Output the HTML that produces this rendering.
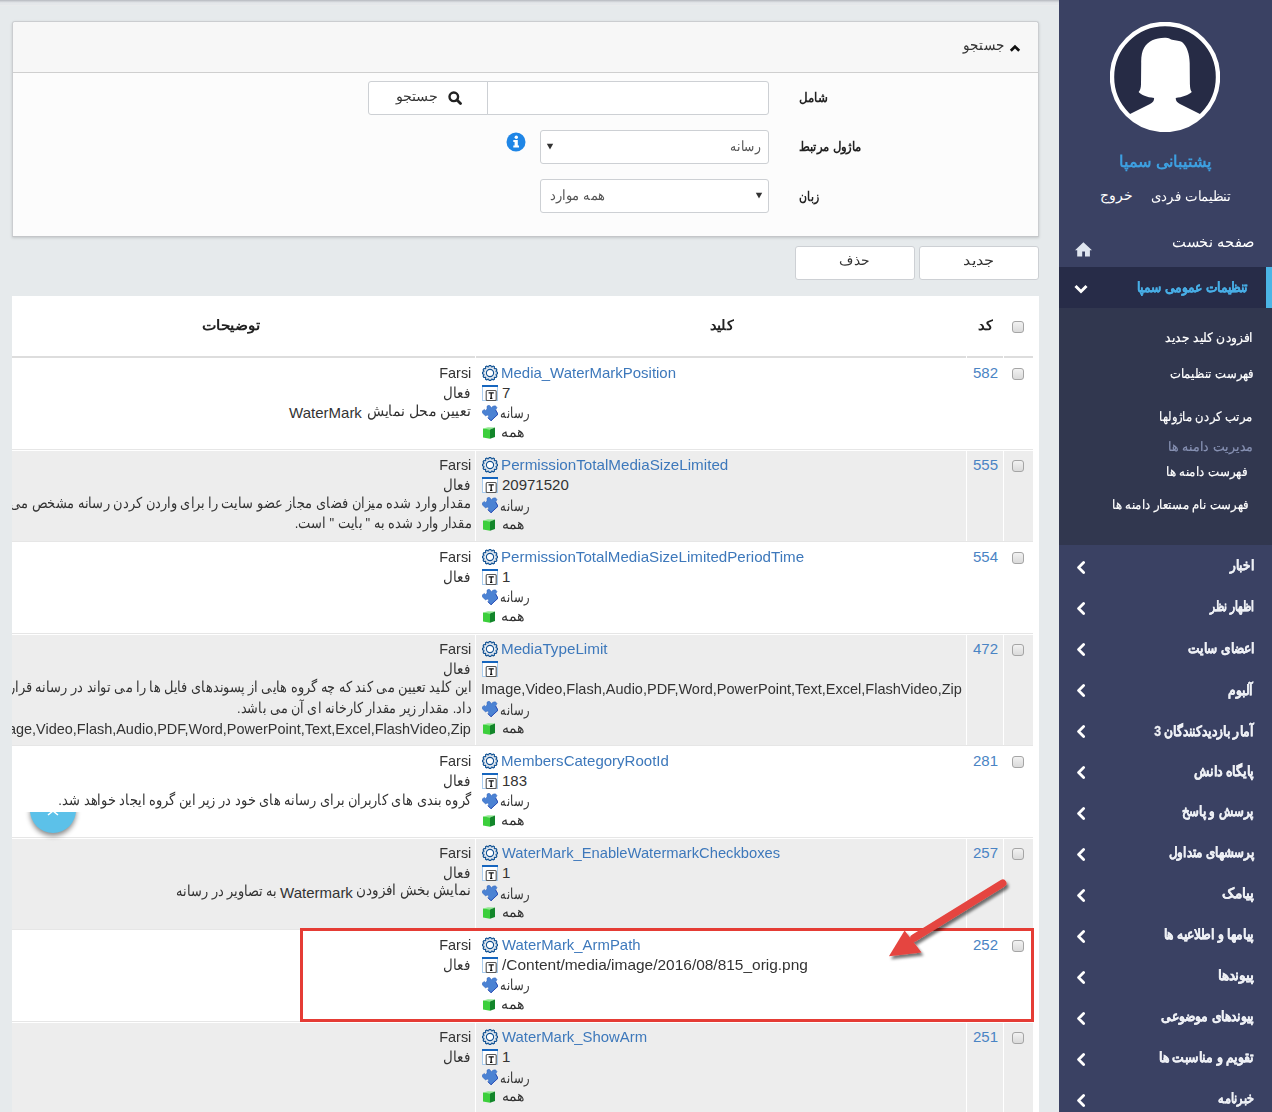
<!DOCTYPE html>
<html><head><meta charset="utf-8">
<style>
*{box-sizing:border-box;margin:0;padding:0}
html,body{width:1272px;height:1112px;overflow:hidden}
body{position:relative;background:#e6eaec;font-family:"Liberation Sans",sans-serif;color:#333}
.a{position:absolute;white-space:nowrap}
.fx{position:absolute;right:0;top:0;direction:rtl;white-space:nowrap;transform-origin:100% 50%}
.lx{position:absolute;left:0;top:0;white-space:nowrap;transform-origin:0 50%}
.topsh{left:0;top:0;width:1059px;height:6px;background:linear-gradient(#b5b8be 0,#d9dce0 2px,#e4e7ea 3px,#e4e7ea 5px,#eeeeee 6px)}
.inp{background:#fff;border:1px solid #cdd0d4;border-radius:3px}
.btn{background:#fff;border:1px solid #cdd0d4;border-radius:3px}
#tp{left:12px;top:296px;width:1027px;height:816px;background:#fff;overflow:hidden}
.cb{position:absolute;width:12px;height:12px;border:1px solid #a5a5a5;border-radius:3px;background:linear-gradient(#f2f2f2,#dadada)}
.ico{position:absolute;width:16px;height:16px}
</style></head><body>
<svg width="0" height="0" style="position:absolute">
<defs>
<symbol id="gear" viewBox="0 0 16 16"><path d="M6.69 1.84 L7.21 0.44 L8.79 0.44 L9.31 1.84 L9.95 2.01 L11.09 1.06 L12.47 1.85 L12.22 3.32 L12.68 3.78 L14.15 3.53 L14.94 4.91 L13.99 6.05 L14.16 6.69 L15.56 7.21 L15.56 8.79 L14.16 9.31 L13.99 9.95 L14.94 11.09 L14.15 12.47 L12.68 12.22 L12.22 12.68 L12.47 14.15 L11.09 14.94 L9.95 13.99 L9.31 14.16 L8.79 15.56 L7.21 15.56 L6.69 14.16 L6.05 13.99 L4.91 14.94 L3.53 14.15 L3.78 12.68 L3.32 12.22 L1.85 12.47 L1.06 11.09 L2.01 9.95 L1.84 9.31 L0.44 8.79 L0.44 7.21 L1.84 6.69 L2.01 6.05 L1.06 4.91 L1.85 3.53 L3.32 3.78 L3.78 3.32 L3.53 1.85 L4.91 1.06 L6.05 2.01 Z" fill="#e3e9f0" stroke="#0d4f92" stroke-width="1.1" stroke-linejoin="round"/><circle cx="8" cy="8" r="3.6" fill="#fff" stroke="#0d4f92" stroke-width="1.1"/></symbol>
<symbol id="tic" viewBox="0 0 16 16"><rect x="0.5" y="0.5" width="15" height="15" fill="#fff" stroke="#a9cdef" stroke-width="1"/><rect x="0" y="0" width="16" height="2" fill="#1666bf"/><rect x="4.2" y="5.5" width="10" height="10" rx="1" fill="#fff" stroke="#555" stroke-width="1.1"/><path d="M6.6 7.8 L11.8 7.8 M9.2 7.8 L9.2 13.4 M8 13.4 L10.4 13.4" fill="none" stroke="#111" stroke-width="1.3"/></symbol>
<symbol id="puz" viewBox="0 0 16 16"><path d="M5 1.2 L6.8 0 L8.6 1.4 L9.4 3 L10.8 1.2 L13.4 0.8 L15 2.6 L13.6 5 L16 9.2 L9 15.8 L6 12.8 L6.9 11 L5.2 10.1 L3.6 10.9 L0.4 8 L0.2 6 L2.4 4.4 L3.6 5.4 L5 4 Z" fill="#4b82d3" stroke="#3064bd" stroke-width="0.5" stroke-linejoin="round"/><path d="M13.6 5 L16 9.2 L9 15.8 L6 12.8" fill="none" stroke="#1d3fae" stroke-width="0.8"/></symbol>
<symbol id="cube" viewBox="0 0 16 16"><path d="M1 3.6 L6 2.2 L13 2.6 L8 4.4 Z" fill="#8fe88f"/><path d="M1 3.6 L8 4.4 L8 13.8 L1 12.4 Z" fill="#3ccf3c"/><path d="M8 4.4 L13 2.6 L13 12 L8 13.8 Z" fill="#12862a"/></symbol>
</defs></svg>
<div class="a topsh"></div>
<div class="a" style="left:1059px;top:0;width:213px;height:1112px;background:#3a4163"></div>
<svg class="a" style="left:1110px;top:22px" width="110" height="110" viewBox="0 0 110 110">
<defs><clipPath id="cc"><circle cx="55" cy="55" r="53"/></clipPath></defs>
<circle cx="55" cy="55" r="53" fill="#262b45"/>
<g clip-path="url(#cc)" fill="#fff">
<path d="M31.2 41 C31 35 32 29 34 26 C38 19 46 15.5 55.8 15.8 C59 16 60 17 62 17.8 C66 18.3 70 19 72 20 C77 24 79.5 32 79.7 41 L79.9 62 C80 66 80.5 68.5 81.8 70.1 C79 73 72 75.5 65.7 76 C65.8 79 67 80.5 70 82 L89.5 91.8 L110 110 L0 110 L20.5 91.8 L40 82 C43 80.5 44.1 79 44.1 76 C37 75.5 31 73 28.6 70.1 C30 68.5 31 66 31 62 Z"/>
</g><circle cx="55" cy="55" r="53" fill="none" stroke="#fff" stroke-width="4.4"/></svg>
<div id="sb_name" class="a" style="left:1211.00px;top:152.20px;font-size:16px;line-height:20px;color:#3d9fe0;font-weight:bold;"><div class="fx" style="transform:scaleX(1.0111)">پشتیبانی سمپا</div></div>
<div id="sb_set" class="a" style="left:1231.00px;top:185.50px;font-size:14px;line-height:20px;color:#fff;"><div class="fx" style="transform:scaleX(0.9530)">تنظیمات فردی</div></div>
<div id="sb_out" class="a" style="left:1133.00px;top:185.00px;font-size:14px;line-height:20px;color:#fff;"><div class="fx" style="transform:scaleX(1.0000)">خروج</div></div>
<div id="sb_home" class="a" style="left:1255.00px;top:232.00px;font-size:15px;line-height:20px;color:#fff;"><div class="fx" style="transform:scaleX(0.9775)">صفحه نخست</div></div>
<svg class="a" style="left:1075px;top:241.5px" width="17" height="15" viewBox="0 0 17 15"><path fill="#dfe5ef" d="M8.4 0.2 L17 8.2 L14.9 8.2 L14.9 14.4 L10 14.4 L10 9.6 L7.2 9.6 L7.2 14.4 L2.2 14.4 L2.2 8.2 L0 8.2 Z"/></svg>
<div class="a" style="left:1059px;top:267px;width:213px;height:41px;background:#272c48"></div>
<div class="a" style="left:1266px;top:267px;width:6px;height:41px;background:#4bb5e6"></div>
<div id="sb_act" class="a" style="left:1248.00px;top:276.50px;font-size:14px;line-height:20px;color:#48aee6;font-weight:bold;-webkit-text-stroke:0.2px #48aee6;"><div class="fx" style="transform:scaleX(0.8747)">تنظیمات عمومی سمپا</div></div>
<svg class="a" style="left:1074px;top:284px" width="14" height="11" viewBox="0 0 14 11"><path d="M1.5 2 L7 7.5 L12.5 2" fill="none" stroke="#fff" stroke-width="3"/></svg>
<div class="a" style="left:1059px;top:308px;width:213px;height:237px;background:#31374f"></div>
<div id="sub1" class="a" style="left:1253.40px;top:327.50px;font-size:13px;line-height:20px;color:#fff;-webkit-text-stroke:0.2px #fff;"><div class="fx" style="transform:scaleX(0.9460)">افزودن کلید جدید</div></div>
<div id="sub2" class="a" style="left:1253.40px;top:363.50px;font-size:13px;line-height:20px;color:#fff;-webkit-text-stroke:0.2px #fff;"><div class="fx" style="transform:scaleX(0.8924)">فهرست تنظیمات</div></div>
<div id="sub3" class="a" style="left:1252.40px;top:406.70px;font-size:13px;line-height:20px;color:#fff;-webkit-text-stroke:0.2px #fff;"><div class="fx" style="transform:scaleX(0.8934)">مرتب کردن ماژولها</div></div>
<div id="sub4" class="a" style="left:1253.40px;top:436.50px;font-size:13px;line-height:20px;color:#8791b3;-webkit-text-stroke:0.2px #8791b3;"><div class="fx" style="transform:scaleX(0.9640)">مدیریت دامنه ها</div></div>
<div id="sub5" class="a" style="left:1247.40px;top:461.50px;font-size:13px;line-height:20px;color:#fff;-webkit-text-stroke:0.2px #fff;"><div class="fx" style="transform:scaleX(0.9086)">فهرست دامنه ها</div></div>
<div id="sub6" class="a" style="left:1248.40px;top:495.30px;font-size:13px;line-height:20px;color:#fff;-webkit-text-stroke:0.2px #fff;"><div class="fx" style="transform:scaleX(0.8988)">فهرست نام مستعار دامنه ها</div></div>
<div id="mn0" class="a" style="left:1254.00px;top:554.50px;font-size:14px;line-height:20px;color:#eef0f5;font-weight:bold;-webkit-text-stroke:0.3px #eef0f5;"><div class="fx" style="transform:scaleX(0.8559)">اخبار</div></div>
<svg class="a" style="left:1076px;top:560.5px" width="10" height="13" viewBox="0 0 10 13"><path d="M7.6 1.6 L2.6 6.5 L7.6 11.4" fill="none" stroke="#fff" stroke-width="2.8" stroke-linecap="round" stroke-linejoin="round"/></svg>
<div id="mn1" class="a" style="left:1254.00px;top:595.50px;font-size:14px;line-height:20px;color:#eef0f5;font-weight:bold;-webkit-text-stroke:0.3px #eef0f5;"><div class="fx" style="transform:scaleX(0.7461)">اظهار نظر</div></div>
<svg class="a" style="left:1076px;top:601.5px" width="10" height="13" viewBox="0 0 10 13"><path d="M7.6 1.6 L2.6 6.5 L7.6 11.4" fill="none" stroke="#fff" stroke-width="2.8" stroke-linecap="round" stroke-linejoin="round"/></svg>
<div id="mn2" class="a" style="left:1255.00px;top:637.50px;font-size:14px;line-height:20px;color:#eef0f5;font-weight:bold;-webkit-text-stroke:0.3px #eef0f5;"><div class="fx" style="transform:scaleX(0.8663)">اعضای سایت</div></div>
<svg class="a" style="left:1076px;top:642.5px" width="10" height="13" viewBox="0 0 10 13"><path d="M7.6 1.6 L2.6 6.5 L7.6 11.4" fill="none" stroke="#fff" stroke-width="2.8" stroke-linecap="round" stroke-linejoin="round"/></svg>
<div id="mn3" class="a" style="left:1253.00px;top:679.50px;font-size:14px;line-height:20px;color:#eef0f5;font-weight:bold;-webkit-text-stroke:0.3px #eef0f5;"><div class="fx" style="transform:scaleX(0.8775)">آلبوم</div></div>
<svg class="a" style="left:1076px;top:683.5px" width="10" height="13" viewBox="0 0 10 13"><path d="M7.6 1.6 L2.6 6.5 L7.6 11.4" fill="none" stroke="#fff" stroke-width="2.8" stroke-linecap="round" stroke-linejoin="round"/></svg>
<div id="mn4" class="a" style="left:1254.00px;top:720.50px;font-size:14px;line-height:20px;color:#eef0f5;font-weight:bold;-webkit-text-stroke:0.3px #eef0f5;"><div class="fx" style="transform:scaleX(0.8752)">آمار بازدیدکنندگان 3</div></div>
<svg class="a" style="left:1076px;top:724.5px" width="10" height="13" viewBox="0 0 10 13"><path d="M7.6 1.6 L2.6 6.5 L7.6 11.4" fill="none" stroke="#fff" stroke-width="2.8" stroke-linecap="round" stroke-linejoin="round"/></svg>
<div id="mn5" class="a" style="left:1254.00px;top:760.50px;font-size:14px;line-height:20px;color:#eef0f5;font-weight:bold;-webkit-text-stroke:0.3px #eef0f5;"><div class="fx" style="transform:scaleX(0.8983)">پایگاه دانش</div></div>
<svg class="a" style="left:1076px;top:765.5px" width="10" height="13" viewBox="0 0 10 13"><path d="M7.6 1.6 L2.6 6.5 L7.6 11.4" fill="none" stroke="#fff" stroke-width="2.8" stroke-linecap="round" stroke-linejoin="round"/></svg>
<div id="mn6" class="a" style="left:1254.00px;top:800.50px;font-size:14px;line-height:20px;color:#eef0f5;font-weight:bold;-webkit-text-stroke:0.3px #eef0f5;"><div class="fx" style="transform:scaleX(0.8381)">پرسش و پاسخ</div></div>
<svg class="a" style="left:1076px;top:806.5px" width="10" height="13" viewBox="0 0 10 13"><path d="M7.6 1.6 L2.6 6.5 L7.6 11.4" fill="none" stroke="#fff" stroke-width="2.8" stroke-linecap="round" stroke-linejoin="round"/></svg>
<div id="mn7" class="a" style="left:1254.00px;top:841.50px;font-size:14px;line-height:20px;color:#eef0f5;font-weight:bold;-webkit-text-stroke:0.3px #eef0f5;"><div class="fx" style="transform:scaleX(0.8416)">پرسشهای متداول</div></div>
<svg class="a" style="left:1076px;top:847.5px" width="10" height="13" viewBox="0 0 10 13"><path d="M7.6 1.6 L2.6 6.5 L7.6 11.4" fill="none" stroke="#fff" stroke-width="2.8" stroke-linecap="round" stroke-linejoin="round"/></svg>
<div id="mn8" class="a" style="left:1254.00px;top:882.50px;font-size:14px;line-height:20px;color:#eef0f5;font-weight:bold;-webkit-text-stroke:0.3px #eef0f5;"><div class="fx" style="transform:scaleX(0.9697)">پیامک</div></div>
<svg class="a" style="left:1076px;top:888.5px" width="10" height="13" viewBox="0 0 10 13"><path d="M7.6 1.6 L2.6 6.5 L7.6 11.4" fill="none" stroke="#fff" stroke-width="2.8" stroke-linecap="round" stroke-linejoin="round"/></svg>
<div id="mn9" class="a" style="left:1254.00px;top:923.50px;font-size:14px;line-height:20px;color:#eef0f5;font-weight:bold;-webkit-text-stroke:0.3px #eef0f5;"><div class="fx" style="transform:scaleX(0.8764)">پیامها و اطلاعیه ها</div></div>
<svg class="a" style="left:1076px;top:929.5px" width="10" height="13" viewBox="0 0 10 13"><path d="M7.6 1.6 L2.6 6.5 L7.6 11.4" fill="none" stroke="#fff" stroke-width="2.8" stroke-linecap="round" stroke-linejoin="round"/></svg>
<div id="mn10" class="a" style="left:1254.00px;top:964.50px;font-size:14px;line-height:20px;color:#eef0f5;font-weight:bold;-webkit-text-stroke:0.3px #eef0f5;"><div class="fx" style="transform:scaleX(0.9807)">پیوندها</div></div>
<svg class="a" style="left:1076px;top:970.5px" width="10" height="13" viewBox="0 0 10 13"><path d="M7.6 1.6 L2.6 6.5 L7.6 11.4" fill="none" stroke="#fff" stroke-width="2.8" stroke-linecap="round" stroke-linejoin="round"/></svg>
<div id="mn11" class="a" style="left:1254.00px;top:1005.50px;font-size:14px;line-height:20px;color:#eef0f5;font-weight:bold;-webkit-text-stroke:0.3px #eef0f5;"><div class="fx" style="transform:scaleX(0.8772)">پیوندهای موضوعی</div></div>
<svg class="a" style="left:1076px;top:1011.5px" width="10" height="13" viewBox="0 0 10 13"><path d="M7.6 1.6 L2.6 6.5 L7.6 11.4" fill="none" stroke="#fff" stroke-width="2.8" stroke-linecap="round" stroke-linejoin="round"/></svg>
<div id="mn12" class="a" style="left:1254.00px;top:1046.50px;font-size:14px;line-height:20px;color:#eef0f5;font-weight:bold;-webkit-text-stroke:0.3px #eef0f5;"><div class="fx" style="transform:scaleX(0.8873)">تقویم و مناسبت ها</div></div>
<svg class="a" style="left:1076px;top:1052.5px" width="10" height="13" viewBox="0 0 10 13"><path d="M7.6 1.6 L2.6 6.5 L7.6 11.4" fill="none" stroke="#fff" stroke-width="2.8" stroke-linecap="round" stroke-linejoin="round"/></svg>
<div id="mn13" class="a" style="left:1254.00px;top:1087.50px;font-size:14px;line-height:20px;color:#eef0f5;font-weight:bold;-webkit-text-stroke:0.3px #eef0f5;"><div class="fx" style="transform:scaleX(0.7961)">خبرنامه</div></div>
<svg class="a" style="left:1076px;top:1093.5px" width="10" height="13" viewBox="0 0 10 13"><path d="M7.6 1.6 L2.6 6.5 L7.6 11.4" fill="none" stroke="#fff" stroke-width="2.8" stroke-linecap="round" stroke-linejoin="round"/></svg>
<div class="a" style="left:12px;top:21px;width:1027px;height:216px;background:#fcfcfc;border:1px solid #cbcdd0;border-bottom-color:#c4c6c9;box-shadow:0 1px 3px rgba(0,0,0,.16);border-radius:3px 3px 0 0"></div>
<div class="a" style="left:13px;top:22px;width:1025px;height:51px;background:#f7f7f7;border-bottom:1px solid #cfcfcf;border-radius:3px 3px 0 0"></div>
<div id="sp_hdr" class="a" style="left:1004.00px;top:35.30px;font-size:15px;line-height:20px;color:#333;"><div class="fx" style="transform:scaleX(0.9111)">جستجو</div></div>
<svg class="a" style="left:1009px;top:43px" width="12" height="10" viewBox="0 0 12 10"><path d="M1.8 7.8 L6 3.6 L10.2 7.8" fill="none" stroke="#111" stroke-width="2.7"/></svg>
<div id="lbl1" class="a" style="left:828.00px;top:87.60px;font-size:13px;line-height:20px;color:#222;font-weight:bold;"><div class="fx" style="transform:scaleX(0.9074)">شامل</div></div>
<div id="lbl2" class="a" style="left:862.00px;top:137.10px;font-size:13px;line-height:20px;color:#222;font-weight:bold;"><div class="fx" style="transform:scaleX(0.9002)">ماژول مرتبط</div></div>
<div id="lbl3" class="a" style="left:819.00px;top:187.40px;font-size:13px;line-height:20px;color:#222;font-weight:bold;"><div class="fx" style="transform:scaleX(0.8333)">زبان</div></div>
<div class="a inp" style="left:486px;top:81px;width:283px;height:34px;border-radius:0 3px 3px 0"></div>
<div class="a btn" style="left:368px;top:81px;width:120px;height:34px;border-radius:3px 0 0 3px"></div>
<div id="sbtn" class="a" style="left:438.00px;top:85.60px;font-size:14px;line-height:20px;color:#333;"><div class="fx" style="transform:scaleX(1.0244)">جستجو</div></div>
<svg class="a" style="left:448px;top:91px" width="14" height="14" viewBox="0 0 14 14"><circle cx="5.8" cy="5.8" r="4.3" fill="none" stroke="#222" stroke-width="2.4"/><path d="M9 9 L12.5 12.5" stroke="#222" stroke-width="2.8" stroke-linecap="round"/></svg>
<div class="a inp" style="left:540px;top:130px;width:229px;height:34px"></div>
<div id="sel1" class="a" style="left:761.00px;top:136.40px;font-size:14px;line-height:20px;color:#555;"><div class="fx" style="transform:scaleX(0.8788)">رسانه</div></div>
<svg class="a" style="left:546px;top:143px" width="8" height="7" viewBox="0 0 8 7"><path d="M0.8 0.8 L7.2 0.8 L4 6.5 Z" fill="#333"/></svg>
<svg class="a" style="left:506px;top:132px" width="20" height="20" viewBox="0 0 20 20"><circle cx="10" cy="10" r="9.5" fill="#1f86e6"/><circle cx="10.3" cy="5.2" r="1.7" fill="#fff"/><path d="M7.3 8 L11.8 8 L11.8 13.6 L13 13.6 L13 15.5 L7.3 15.5 L7.3 13.6 L8.6 13.6 L8.6 9.9 L7.3 9.9 Z" fill="#fff"/></svg>
<div class="a inp" style="left:540px;top:179px;width:229px;height:34px"></div>
<div id="sel2" class="a" style="left:605.00px;top:185.40px;font-size:14px;line-height:20px;color:#555;"><div class="fx" style="transform:scaleX(0.9332)">همه موارد</div></div>
<svg class="a" style="left:755px;top:192px" width="8" height="7" viewBox="0 0 8 7"><path d="M0.8 0.8 L7.2 0.8 L4 6.5 Z" fill="#333"/></svg>
<div class="a btn" style="left:919px;top:246px;width:120px;height:34px"></div>
<div class="a btn" style="left:795px;top:246px;width:120px;height:34px"></div>
<div id="bnew" class="a" style="left:995.00px;top:250.00px;font-size:14px;line-height:20px;color:#333;"><div class="fx" style="transform:scaleX(1.1689)">جدید</div></div>
<div id="bdel" class="a" style="left:869.80px;top:250.00px;font-size:14px;line-height:20px;color:#333;"><div class="fx" style="transform:scaleX(0.9889)">حذف</div></div>
<div class="a" id="tp">
<div id="th_code" class="a" style="left:981.00px;top:19.00px;font-size:14px;line-height:20px;color:#222;font-weight:bold;"><div class="fx" style="transform:scaleX(1.0714)">کد</div></div>
<div id="th_key" class="a" style="left:722.00px;top:18.50px;font-size:14px;line-height:20px;color:#222;font-weight:bold;"><div class="fx" style="transform:scaleX(1.0435)">کلید</div></div>
<div id="th_desc" class="a" style="left:248.00px;top:19.30px;font-size:14px;line-height:20px;color:#222;font-weight:bold;"><div class="fx" style="transform:scaleX(1.0947)">توضیحات</div></div>
<div class="cb" style="left:1000px;top:25px"></div>
<div class="a" style="left:0;top:60px;width:1021px;height:2px;background:#dddddd"></div>
<div class="a" style="left:463px;top:60px;width:1px;height:2px;background:#fff"></div>
<div class="a" style="left:954px;top:60px;width:1px;height:2px;background:#fff"></div>
<div class="a" style="left:991px;top:60px;width:1px;height:2px;background:#fff"></div>
<div class="cb" style="left:1000px;top:72px"></div>
<div class="a" style="left:961.00px;top:67.00px;font-size:15px;line-height:20px;color:#4a84c4;">582</div>
<svg class="ico" style="left:470px;top:69px"><use href="#gear"/></svg>
<div id="l0_0" class="a" style="left:489.00px;top:67.00px;font-size:15px;line-height:20px;color:#3d78bb;"><div class="lx" style="transform:scaleX(0.9982)">Media_WaterMarkPosition</div></div>
<svg class="ico" style="left:470px;top:89px"><use href="#tic"/></svg>
<div class="a" style="left:490.00px;top:87.00px;font-size:15px;line-height:20px;color:#333;">7</div>
<svg class="ico" style="left:470px;top:109px"><use href="#puz"/></svg>
<div id="k0_2" class="a" style="left:517.00px;top:107.00px;font-size:15px;line-height:20px;color:#333;"><div class="fx" style="transform:scaleX(0.7715)">رسانه</div></div>
<svg class="ico" style="left:470px;top:129px"><use href="#cube"/></svg>
<div id="k0_3" class="a" style="left:513.00px;top:126.00px;font-size:15px;line-height:20px;color:#333;"><div class="fx" style="transform:scaleX(0.9517)">همه</div></div>
<div class="a" style="left:459px;top:67px;font-size:15px;line-height:20px;color:#333"><div class="fx" style="direction:ltr;transform:scaleX(0.964)">Farsi</div></div>
<div id="d0_1" class="a" style="left:458.00px;top:87.00px;font-size:15px;line-height:20px;color:#333;"><div class="fx" style="transform:scaleX(0.8966)">فعال</div></div>
<div id="d0_2_0" class="a" style="left:458.00px;top:105.00px;font-size:15px;line-height:20px;color:#333;"><div class="fx" style="transform:scaleX(0.9390)">تعیین محل نمایش</div></div>
<div class="a" style="left:277.10px;top:107.00px;font-size:15px;line-height:20px;color:#333;">WaterMark</div>
<div class="a" style="left:0;top:153px;width:1021px;height:1px;background:#e6e6e6"></div>
<div class="a" style="left:0;top:155px;width:1021px;height:90px;background:#ededed"></div>
<div class="a" style="left:463px;top:155px;width:1px;height:90px;background:#fff"></div>
<div class="a" style="left:954px;top:155px;width:1px;height:90px;background:#fff"></div>
<div class="a" style="left:991px;top:155px;width:1px;height:90px;background:#fff"></div>
<div class="cb" style="left:1000px;top:164px"></div>
<div class="a" style="left:961.00px;top:159.00px;font-size:15px;line-height:20px;color:#4a84c4;">555</div>
<svg class="ico" style="left:470px;top:161px"><use href="#gear"/></svg>
<div id="l1_0" class="a" style="left:489.00px;top:159.00px;font-size:15px;line-height:20px;color:#3d78bb;"><div class="lx" style="transform:scaleX(1.0135)">PermissionTotalMediaSizeLimited</div></div>
<svg class="ico" style="left:470px;top:181px"><use href="#tic"/></svg>
<div class="a" style="left:490.00px;top:179.00px;font-size:15px;line-height:20px;color:#333;">20971520</div>
<svg class="ico" style="left:470px;top:201px"><use href="#puz"/></svg>
<div id="k1_2" class="a" style="left:517.00px;top:199.50px;font-size:15px;line-height:20px;color:#333;"><div class="fx" style="transform:scaleX(0.7715)">رسانه</div></div>
<svg class="ico" style="left:470px;top:221px"><use href="#cube"/></svg>
<div id="k1_3" class="a" style="left:513.00px;top:218.00px;font-size:15px;line-height:20px;color:#333;"><div class="fx" style="transform:scaleX(0.9395)">همه</div></div>
<div class="a" style="left:459px;top:159px;font-size:15px;line-height:20px;color:#333"><div class="fx" style="direction:ltr;transform:scaleX(0.964)">Farsi</div></div>
<div id="d1_1" class="a" style="left:458.00px;top:179.00px;font-size:15px;line-height:20px;color:#333;"><div class="fx" style="transform:scaleX(0.8966)">فعال</div></div>
<div id="d1_2" class="a" style="left:459px;top:196.80px;font-size:15px;line-height:20px;color:#333"><div class="fx" style="transform:scaleX(0.865)">مقدار وارد شده میزان فضای مجاز عضو سایت را برای واردن کردن رسانه مشخص می کند</div></div>
<div id="d1_3_0" class="a" style="left:460.00px;top:217.00px;font-size:15px;line-height:20px;color:#333;"><div class="fx" style="transform:scaleX(0.8650)">مقدار وارد شده به " بایت " است.</div></div>
<div class="a" style="left:0;top:245px;width:1021px;height:1px;background:#e6e6e6"></div>
<div class="cb" style="left:1000px;top:256px"></div>
<div class="a" style="left:961.00px;top:251.00px;font-size:15px;line-height:20px;color:#4a84c4;">554</div>
<svg class="ico" style="left:470px;top:253px"><use href="#gear"/></svg>
<div id="l2_0" class="a" style="left:489.00px;top:251.00px;font-size:15px;line-height:20px;color:#3d78bb;"><div class="lx" style="transform:scaleX(1.0090)">PermissionTotalMediaSizeLimitedPeriodTime</div></div>
<svg class="ico" style="left:470px;top:273px"><use href="#tic"/></svg>
<div class="a" style="left:490.00px;top:271.00px;font-size:15px;line-height:20px;color:#333;">1</div>
<svg class="ico" style="left:470px;top:293px"><use href="#puz"/></svg>
<div id="k2_2" class="a" style="left:517.00px;top:291.00px;font-size:15px;line-height:20px;color:#333;"><div class="fx" style="transform:scaleX(0.7715)">رسانه</div></div>
<svg class="ico" style="left:470px;top:313px"><use href="#cube"/></svg>
<div id="k2_3" class="a" style="left:513.00px;top:310.00px;font-size:15px;line-height:20px;color:#333;"><div class="fx" style="transform:scaleX(0.9517)">همه</div></div>
<div class="a" style="left:459px;top:251px;font-size:15px;line-height:20px;color:#333"><div class="fx" style="direction:ltr;transform:scaleX(0.964)">Farsi</div></div>
<div id="d2_1" class="a" style="left:458.00px;top:271.00px;font-size:15px;line-height:20px;color:#333;"><div class="fx" style="transform:scaleX(0.8966)">فعال</div></div>
<div class="a" style="left:0;top:337px;width:1021px;height:1px;background:#e6e6e6"></div>
<div class="a" style="left:0;top:339px;width:1021px;height:110px;background:#ededed"></div>
<div class="a" style="left:463px;top:339px;width:1px;height:110px;background:#fff"></div>
<div class="a" style="left:954px;top:339px;width:1px;height:110px;background:#fff"></div>
<div class="a" style="left:991px;top:339px;width:1px;height:110px;background:#fff"></div>
<div class="cb" style="left:1000px;top:348px"></div>
<div class="a" style="left:961.00px;top:343.00px;font-size:15px;line-height:20px;color:#4a84c4;">472</div>
<svg class="ico" style="left:470px;top:345px"><use href="#gear"/></svg>
<div id="l3_0" class="a" style="left:489.00px;top:343.00px;font-size:15px;line-height:20px;color:#3d78bb;"><div class="lx" style="transform:scaleX(1.0137)">MediaTypeLimit</div></div>
<svg class="ico" style="left:470px;top:365px"><use href="#tic"/></svg>
<div class="a" style="left:490.00px;top:363.00px;font-size:15px;line-height:20px;color:#333;"></div>
<div id="l3_2" class="a" style="left:469.00px;top:383.00px;font-size:15px;line-height:20px;color:#333;"><div class="lx" style="transform:scaleX(0.9677)">Image,Video,Flash,Audio,PDF,Word,PowerPoint,Text,Excel,FlashVideo,Zip</div></div>
<svg class="ico" style="left:470px;top:405px"><use href="#puz"/></svg>
<div id="k3_3" class="a" style="left:517.00px;top:403.50px;font-size:15px;line-height:20px;color:#333;"><div class="fx" style="transform:scaleX(0.7715)">رسانه</div></div>
<svg class="ico" style="left:470px;top:425px"><use href="#cube"/></svg>
<div id="k3_4" class="a" style="left:513.00px;top:422.00px;font-size:15px;line-height:20px;color:#333;"><div class="fx" style="transform:scaleX(0.9395)">همه</div></div>
<div class="a" style="left:459px;top:343px;font-size:15px;line-height:20px;color:#333"><div class="fx" style="direction:ltr;transform:scaleX(0.964)">Farsi</div></div>
<div id="d3_1" class="a" style="left:458.00px;top:363.00px;font-size:15px;line-height:20px;color:#333;"><div class="fx" style="transform:scaleX(0.8966)">فعال</div></div>
<div id="d3_2" class="a" style="left:459px;top:380.80px;font-size:15px;line-height:20px;color:#333"><div class="fx" style="transform:scaleX(0.865)">این کلید تعیین می کند که چه گروه هایی از پسوندهای فایل ها را می تواند در رسانه قرار</div></div>
<div id="d3_3_0" class="a" style="left:460.00px;top:402.00px;font-size:15px;line-height:20px;color:#333;"><div class="fx" style="transform:scaleX(0.8511)">داد. مقدار زیر مقدار کارخانه ای آن می باشد.</div></div>
<div class="a" style="left:459px;top:423px;font-size:15px;line-height:20px;color:#333"><div class="fx" style="direction:ltr;transform:scaleX(0.964)">Image,Video,Flash,Audio,PDF,Word,PowerPoint,Text,Excel,FlashVideo,Zip</div></div>
<div class="a" style="left:0;top:449px;width:1021px;height:1px;background:#e6e6e6"></div>
<div class="cb" style="left:1000px;top:460px"></div>
<div class="a" style="left:961.00px;top:455.00px;font-size:15px;line-height:20px;color:#4a84c4;">281</div>
<svg class="ico" style="left:470px;top:457px"><use href="#gear"/></svg>
<div id="l4_0" class="a" style="left:489.00px;top:455.00px;font-size:15px;line-height:20px;color:#3d78bb;"><div class="lx" style="transform:scaleX(1.0019)">MembersCategoryRootId</div></div>
<svg class="ico" style="left:470px;top:477px"><use href="#tic"/></svg>
<div class="a" style="left:490.00px;top:475.00px;font-size:15px;line-height:20px;color:#333;">183</div>
<svg class="ico" style="left:470px;top:497px"><use href="#puz"/></svg>
<div id="k4_2" class="a" style="left:517.00px;top:495.00px;font-size:15px;line-height:20px;color:#333;"><div class="fx" style="transform:scaleX(0.7715)">رسانه</div></div>
<svg class="ico" style="left:470px;top:517px"><use href="#cube"/></svg>
<div id="k4_3" class="a" style="left:513.00px;top:514.00px;font-size:15px;line-height:20px;color:#333;"><div class="fx" style="transform:scaleX(0.9517)">همه</div></div>
<div class="a" style="left:459px;top:455px;font-size:15px;line-height:20px;color:#333"><div class="fx" style="direction:ltr;transform:scaleX(0.964)">Farsi</div></div>
<div id="d4_1" class="a" style="left:458.00px;top:475.00px;font-size:15px;line-height:20px;color:#333;"><div class="fx" style="transform:scaleX(0.8966)">فعال</div></div>
<div id="d4_2_0" class="a" style="left:460.00px;top:493.50px;font-size:15px;line-height:20px;color:#333;"><div class="fx" style="transform:scaleX(0.8675)">گروه بندی های کاربران برای رسانه های خود در زیر این گروه ایجاد خواهد شد.</div></div>
<div class="a" style="left:0;top:541px;width:1021px;height:1px;background:#e6e6e6"></div>
<div class="a" style="left:0;top:543px;width:1021px;height:90px;background:#ededed"></div>
<div class="a" style="left:463px;top:543px;width:1px;height:90px;background:#fff"></div>
<div class="a" style="left:954px;top:543px;width:1px;height:90px;background:#fff"></div>
<div class="a" style="left:991px;top:543px;width:1px;height:90px;background:#fff"></div>
<div class="cb" style="left:1000px;top:552px"></div>
<div class="a" style="left:961.00px;top:547.00px;font-size:15px;line-height:20px;color:#4a84c4;">257</div>
<svg class="ico" style="left:470px;top:549px"><use href="#gear"/></svg>
<div id="l5_0" class="a" style="left:490.00px;top:547.00px;font-size:15px;line-height:20px;color:#3d78bb;"><div class="lx" style="transform:scaleX(0.9823)">WaterMark_EnableWatermarkCheckboxes</div></div>
<svg class="ico" style="left:470px;top:569px"><use href="#tic"/></svg>
<div class="a" style="left:490.00px;top:567.00px;font-size:15px;line-height:20px;color:#333;">1</div>
<svg class="ico" style="left:470px;top:589px"><use href="#puz"/></svg>
<div id="k5_2" class="a" style="left:517.00px;top:587.50px;font-size:15px;line-height:20px;color:#333;"><div class="fx" style="transform:scaleX(0.7715)">رسانه</div></div>
<svg class="ico" style="left:470px;top:609px"><use href="#cube"/></svg>
<div id="k5_3" class="a" style="left:513.00px;top:606.00px;font-size:15px;line-height:20px;color:#333;"><div class="fx" style="transform:scaleX(0.9395)">همه</div></div>
<div class="a" style="left:459px;top:547px;font-size:15px;line-height:20px;color:#333"><div class="fx" style="direction:ltr;transform:scaleX(0.964)">Farsi</div></div>
<div id="d5_1" class="a" style="left:458.00px;top:567.00px;font-size:15px;line-height:20px;color:#333;"><div class="fx" style="transform:scaleX(0.8966)">فعال</div></div>
<div id="d5_2_0" class="a" style="left:458.80px;top:584.00px;font-size:15px;line-height:20px;color:#333;"><div class="fx" style="transform:scaleX(0.9056)">نمایش بخش افزودن</div></div>
<div class="a" style="left:268.10px;top:587.00px;font-size:15px;line-height:20px;color:#333;">Watermark</div>
<div id="d5_2_2" class="a" style="left:264.40px;top:584.50px;font-size:15px;line-height:20px;color:#333;"><div class="fx" style="transform:scaleX(0.8591)">به تصاویر در رسانه</div></div>
<div class="a" style="left:0;top:633px;width:1021px;height:1px;background:#e6e6e6"></div>
<div class="cb" style="left:1000px;top:644px"></div>
<div class="a" style="left:961.00px;top:639.00px;font-size:15px;line-height:20px;color:#4a84c4;">252</div>
<svg class="ico" style="left:470px;top:641px"><use href="#gear"/></svg>
<div id="l6_0" class="a" style="left:490.00px;top:639.00px;font-size:15px;line-height:20px;color:#3d78bb;"><div class="lx" style="transform:scaleX(0.9934)">WaterMark_ArmPath</div></div>
<svg class="ico" style="left:470px;top:661px"><use href="#tic"/></svg>
<div id="l6_1" class="a" style="left:490.00px;top:659.00px;font-size:15px;line-height:20px;color:#333;"><div class="lx" style="transform:scaleX(1.0304)">/Content/media/image/2016/08/815_orig.png</div></div>
<svg class="ico" style="left:470px;top:681px"><use href="#puz"/></svg>
<div id="k6_2" class="a" style="left:517.00px;top:679.00px;font-size:15px;line-height:20px;color:#333;"><div class="fx" style="transform:scaleX(0.7715)">رسانه</div></div>
<svg class="ico" style="left:470px;top:701px"><use href="#cube"/></svg>
<div id="k6_3" class="a" style="left:513.00px;top:698.00px;font-size:15px;line-height:20px;color:#333;"><div class="fx" style="transform:scaleX(0.9517)">همه</div></div>
<div class="a" style="left:459px;top:639px;font-size:15px;line-height:20px;color:#333"><div class="fx" style="direction:ltr;transform:scaleX(0.964)">Farsi</div></div>
<div id="d6_1" class="a" style="left:458.00px;top:659.00px;font-size:15px;line-height:20px;color:#333;"><div class="fx" style="transform:scaleX(0.8966)">فعال</div></div>
<div class="a" style="left:0;top:725px;width:1021px;height:1px;background:#e6e6e6"></div>
<div class="a" style="left:0;top:727px;width:1021px;height:90px;background:#ededed"></div>
<div class="a" style="left:463px;top:727px;width:1px;height:90px;background:#fff"></div>
<div class="a" style="left:954px;top:727px;width:1px;height:90px;background:#fff"></div>
<div class="a" style="left:991px;top:727px;width:1px;height:90px;background:#fff"></div>
<div class="cb" style="left:1000px;top:736px"></div>
<div class="a" style="left:961.00px;top:731.00px;font-size:15px;line-height:20px;color:#4a84c4;">251</div>
<svg class="ico" style="left:470px;top:733px"><use href="#gear"/></svg>
<div id="l7_0" class="a" style="left:490.00px;top:731.00px;font-size:15px;line-height:20px;color:#3d78bb;"><div class="lx" style="transform:scaleX(0.9932)">WaterMark_ShowArm</div></div>
<svg class="ico" style="left:470px;top:753px"><use href="#tic"/></svg>
<div class="a" style="left:490.00px;top:751.00px;font-size:15px;line-height:20px;color:#333;">1</div>
<svg class="ico" style="left:470px;top:773px"><use href="#puz"/></svg>
<div id="k7_2" class="a" style="left:517.00px;top:771.50px;font-size:15px;line-height:20px;color:#333;"><div class="fx" style="transform:scaleX(0.7715)">رسانه</div></div>
<svg class="ico" style="left:470px;top:793px"><use href="#cube"/></svg>
<div id="k7_3" class="a" style="left:513.00px;top:790.00px;font-size:15px;line-height:20px;color:#333;"><div class="fx" style="transform:scaleX(0.9395)">همه</div></div>
<div class="a" style="left:459px;top:731px;font-size:15px;line-height:20px;color:#333"><div class="fx" style="direction:ltr;transform:scaleX(0.964)">Farsi</div></div>
<div id="d7_1" class="a" style="left:458.00px;top:751.00px;font-size:15px;line-height:20px;color:#333;"><div class="fx" style="transform:scaleX(0.8966)">فعال</div></div>
</div>
<div class="a" style="left:300px;top:928px;width:734px;height:94px;border:3px solid #e53c35"></div>
<div class="a" style="left:30px;top:787px;width:46px;height:46px;border-radius:50%;background:#5cc1e9;box-shadow:0 3px 5px rgba(0,0,0,.45);clip-path:inset(25px -12px -12px -12px)"></div>
<svg class="a" style="left:46px;top:810px" width="14" height="6" viewBox="0 0 14 6"><path d="M2 5 L7 1 L12 5" fill="none" stroke="#fff" stroke-width="1.6"/></svg>
<svg class="a" style="left:870px;top:860px;overflow:visible" width="160" height="120" viewBox="0 0 160 120">
<defs><filter id="sh" x="-20%" y="-20%" width="150%" height="150%"><feGaussianBlur in="SourceAlpha" stdDeviation="1.8"/><feOffset dx="2" dy="3"/><feComponentTransfer><feFuncA type="linear" slope="0.55"/></feComponentTransfer><feMerge><feMergeNode/><feMergeNode in="SourceGraphic"/></feMerge></filter></defs>
<g filter="url(#sh)" fill="#e5453f">
<path d="M132.7 23.3 L44 78" stroke="#e5453f" stroke-width="7.5" stroke-linecap="round"/>
<path d="M18.9 96.2 L34.6 70.4 L51.6 92.5 Z"/>
</g></svg>
</body></html>
